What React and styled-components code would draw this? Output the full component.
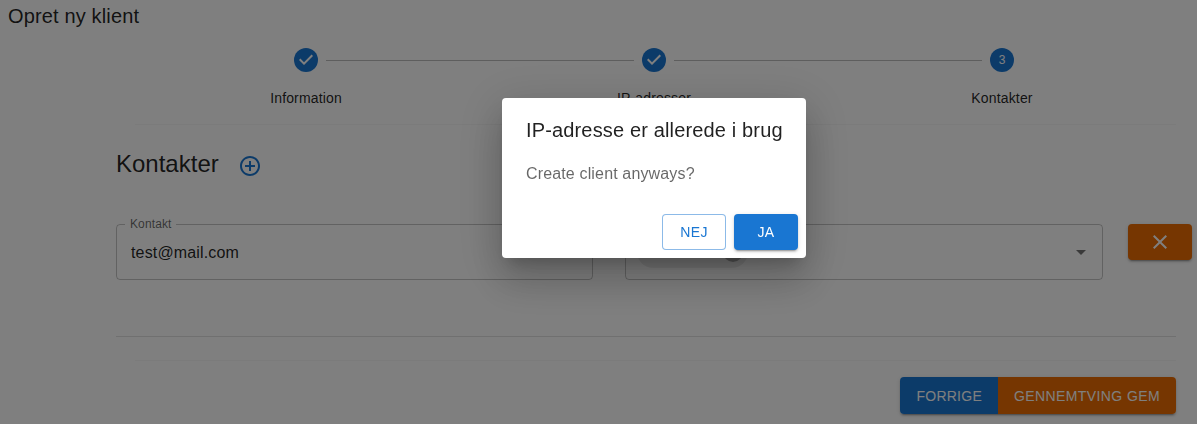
import styled, { createGlobalStyle } from "styled-components";

const GlobalStyle = createGlobalStyle`
  html, body {
    margin: 0;
    padding: 0;
    background: #fff;
    overflow: hidden;
  }
  body {
    font-family: "Liberation Sans", Arial, sans-serif;
    color: rgba(0, 0, 0, 0.87);
  }
`;

const Page = styled.div`
  padding: 0 8px 10px;
`;
const PageTitle = styled.h1`
  margin: 0;
  font-size: 20px;
  font-weight: 400;
  line-height: 32px;
  letter-spacing: 0.15px;
`;
const Content = styled.main`
  width: 1060px;
  margin-left: 108px;
`;
const Stepper = styled.div`
  display: grid;
  grid-template-columns: 24px 1fr 24px 1fr 24px;
  column-gap: 8px;
  row-gap: 16px;
  width: 720px;
  margin: 16px 0 0 178px;
`;
const StepIcon = styled.svg`
  display: block;
  width: 24px;
  height: 24px;
  fill: #1976d2;
`;
const Connector = styled.div`
  align-self: center;
  border-top: 1px solid #bdbdbd;
`;
const StepLabel = styled.div`
  grid-column: ${(props) => props.$column};
  justify-self: center;
  width: max-content;
  font-size: 14px;
  line-height: 20px;
  letter-spacing: 0.15px;
`;
const FaintLine = styled.div`
  height: 1px;
  margin: ${(props) => props.$margin};
  background: rgba(0, 0, 0, 0.035);
`;
const SectionHead = styled.div`
  display: flex;
  align-items: center;
  gap: 20px;
  height: 32px;
`;
const SectionTitle = styled.h2`
  margin: 0;
  font-size: 24px;
  font-weight: 400;
  line-height: 32px;
`;
const AddIcon = styled.svg`
  display: block;
  width: 24px;
  height: 24px;
  margin: 4px 0 0 -1px;
  fill: #1976d2;
`;
const FieldRow = styled.div`
  display: flex;
  align-items: flex-start;
  gap: 32px;
  margin-top: 44px;
`;
const Field = styled.div`
  position: relative;
  flex: 0 0 ${(props) => props.$width}px;
  display: flex;
  align-items: center;
  justify-content: space-between;
  box-sizing: border-box;
  height: 56px;
  padding: 0 9px 0 14px;
  border: 1px solid rgba(0, 0, 0, 0.23);
  border-radius: 4px;
`;
const FieldLabel = styled.label`
  position: absolute;
  top: -8px;
  left: 8px;
  padding: 0 5px;
  background: #fff;
  font-size: 12px;
  line-height: 14px;
  letter-spacing: 0.11px;
  color: rgba(0, 0, 0, 0.6);
`;
const FieldValue = styled.span`
  padding-top: 2px;
  font-size: 16px;
  line-height: 24px;
  letter-spacing: 0.15px;
`;
const Chip = styled.div`
  display: flex;
  align-items: center;
  justify-content: flex-end;
  box-sizing: border-box;
  width: 111px;
  height: 32px;
  margin: -1px 0 0 -3px;
  padding-right: 5px;
  border-radius: 16px;
  background: rgba(0, 0, 0, 0.08);
`;
const ChipDelete = styled.span`
  width: 20px;
  height: 20px;
  border-radius: 50%;
  background: rgba(0, 0, 0, 0.3);
`;
const ArrowIcon = styled.svg`
  display: block;
  width: 24px;
  height: 24px;
  fill: rgba(0, 0, 0, 0.54);
`;
const RemoveButton = styled.button`
  flex: none;
  display: flex;
  align-items: center;
  justify-content: center;
  width: 64px;
  height: 36px;
  margin-left: -7px;
  padding: 0;
  border: 0;
  border-radius: 4px;
  background: #ed6c02;
  box-shadow: 0 3px 1px -2px rgba(0, 0, 0, 0.2), 0 2px 2px 0 rgba(0, 0, 0, 0.14),
    0 1px 5px 0 rgba(0, 0, 0, 0.12);
`;
const CloseIcon = styled.svg`
  display: block;
  width: 24px;
  height: 24px;
  fill: #fff;
`;
const Divider = styled.hr`
  margin: 56px 0 0;
  border: 0;
  border-top: 1px solid rgba(0, 0, 0, 0.12);
`;
const Actions = styled.div`
  display: flex;
  justify-content: flex-end;
  margin-top: 16px;
`;
const ButtonGroup = styled.div`
  display: flex;
  border-radius: 4px;
  box-shadow: 0 3px 1px -2px rgba(0, 0, 0, 0.2), 0 2px 2px 0 rgba(0, 0, 0, 0.14),
    0 1px 5px 0 rgba(0, 0, 0, 0.12);
`;
const GroupButton = styled.button`
  height: 37px;
  padding: 0 16px;
  border: 0;
  border-radius: ${(props) => props.$radius};
  background: ${(props) => props.$color};
  color: #fff;
  font-family: inherit;
  font-size: 14px;
  letter-spacing: ${(props) => props.$spacing};
  text-transform: uppercase;
`;
const Backdrop = styled.div`
  position: fixed;
  inset: 0;
  background: rgba(0, 0, 0, 0.5);
`;
const Dialog = styled.div`
  position: absolute;
  left: 502px;
  top: 98px;
  display: flex;
  flex-direction: column;
  box-sizing: border-box;
  width: 304px;
  height: 160px;
  border-radius: 4px;
  background: #fff;
  box-shadow: 0 11px 15px -7px rgba(0, 0, 0, 0.2), 0 24px 38px 3px rgba(0, 0, 0, 0.14),
    0 9px 46px 8px rgba(0, 0, 0, 0.12);
`;
const DialogTitle = styled.h2`
  margin: 0;
  padding: 16px 0 16px 24px;
  font-size: 20px;
  font-weight: 400;
  line-height: 32px;
  letter-spacing: 0.15px;
  white-space: nowrap;
`;
const DialogText = styled.p`
  margin: 0;
  padding: 0 24px;
  font-size: 16px;
  line-height: 24px;
  letter-spacing: 0.15px;
  color: rgba(0, 0, 0, 0.6);
`;
const DialogActions = styled.div`
  display: flex;
  justify-content: flex-end;
  gap: 8px;
  margin-top: auto;
  padding: 0 8px 8px;
`;
const DialogButton = styled.button`
  box-sizing: border-box;
  width: 64px;
  height: 36px;
  padding: 0;
  border: ${(props) => (props.$filled ? "0" : "1px solid rgba(25, 118, 210, 0.5)")};
  border-radius: 4px;
  background: ${(props) => (props.$filled ? "#1976d2" : "#fff")};
  color: ${(props) => (props.$filled ? "#fff" : "#1976d2")};
  font-family: inherit;
  font-size: 14px;
  letter-spacing: 0.4px;
  box-shadow: ${(props) =>
    props.$filled
      ? "0 3px 1px -2px rgba(0,0,0,.2), 0 2px 2px 0 rgba(0,0,0,.14), 0 1px 5px 0 rgba(0,0,0,.12)"
      : "none"};
`;

function DoneIcon() {
  return (
    <StepIcon viewBox="0 0 24 24">
      <circle cx="12" cy="12" r="12" />
      <path fill="#fff" d="M10 17l-5-5 1.41-1.41L10 14.17l7.59-7.59L19 8l-9 9z" />
    </StepIcon>
  );
}

export default function App() {
  return (
    <>
      <GlobalStyle />
      <Page>
        <PageTitle>Opret ny klient</PageTitle>
        <Content>
          <Stepper>
            <DoneIcon />
            <Connector />
            <DoneIcon />
            <Connector />
            <StepIcon viewBox="0 0 24 24">
              <circle cx="12" cy="12" r="12" />
              <text x="12" y="16" textAnchor="middle" fontSize="12" fill="#fff">
                3
              </text>
            </StepIcon>
            <StepLabel $column={1}>Information</StepLabel>
            <StepLabel $column={3}>IP-adresser</StepLabel>
            <StepLabel $column={5}>Kontakter</StepLabel>
          </Stepper>
          <FaintLine $margin="16px 0 23px 19px" />
          <SectionHead>
            <SectionTitle>Kontakter</SectionTitle>
            <AddIcon viewBox="0 0 24 24">
              <path d="M13 7h-2v4H7v2h4v4h2v-4h4v-2h-4V7zm-1-5C6.49 2 2 6.49 2 12s4.49 10 10 10 10-4.49 10-10S17.51 2 12 2zm0 18c-4.41 0-8-3.59-8-8s3.59-8 8-8 8 3.59 8 8-3.59 8-8 8z" />
            </AddIcon>
          </SectionHead>
          <FieldRow>
            <Field $width={477}>
              <FieldLabel>Kontakt</FieldLabel>
              <FieldValue>test@mail.com</FieldValue>
            </Field>
            <Field $width={478}>
              <Chip>
                <ChipDelete />
              </Chip>
              <ArrowIcon viewBox="0 0 24 24">
                <path d="M7 10l5 5 5-5z" />
              </ArrowIcon>
            </Field>
            <RemoveButton>
              <CloseIcon viewBox="0 0 24 24">
                <path d="M19 6.41 17.59 5 12 10.59 6.41 5 5 6.41 10.59 12 5 17.59 6.41 19 12 13.41 17.59 19 19 17.59 13.41 12z" />
              </CloseIcon>
            </RemoveButton>
          </FieldRow>
          <Divider />
          <FaintLine $margin="23px 0 0 19px" />
          <Actions>
            <ButtonGroup>
              <GroupButton $color="#1976d2" $radius="4px 0 0 4px" $spacing="0.25px">
                Forrige
              </GroupButton>
              <GroupButton $color="#ed6c02" $radius="0 4px 4px 0" $spacing="0.4px">
                Gennemtving gem
              </GroupButton>
            </ButtonGroup>
          </Actions>
        </Content>
      </Page>
      <Backdrop>
        <Dialog>
          <DialogTitle>IP-adresse er allerede i brug</DialogTitle>
          <DialogText>Create client anyways?</DialogText>
          <DialogActions>
            <DialogButton>NEJ</DialogButton>
            <DialogButton $filled>JA</DialogButton>
          </DialogActions>
        </Dialog>
      </Backdrop>
    </>
  );
}
